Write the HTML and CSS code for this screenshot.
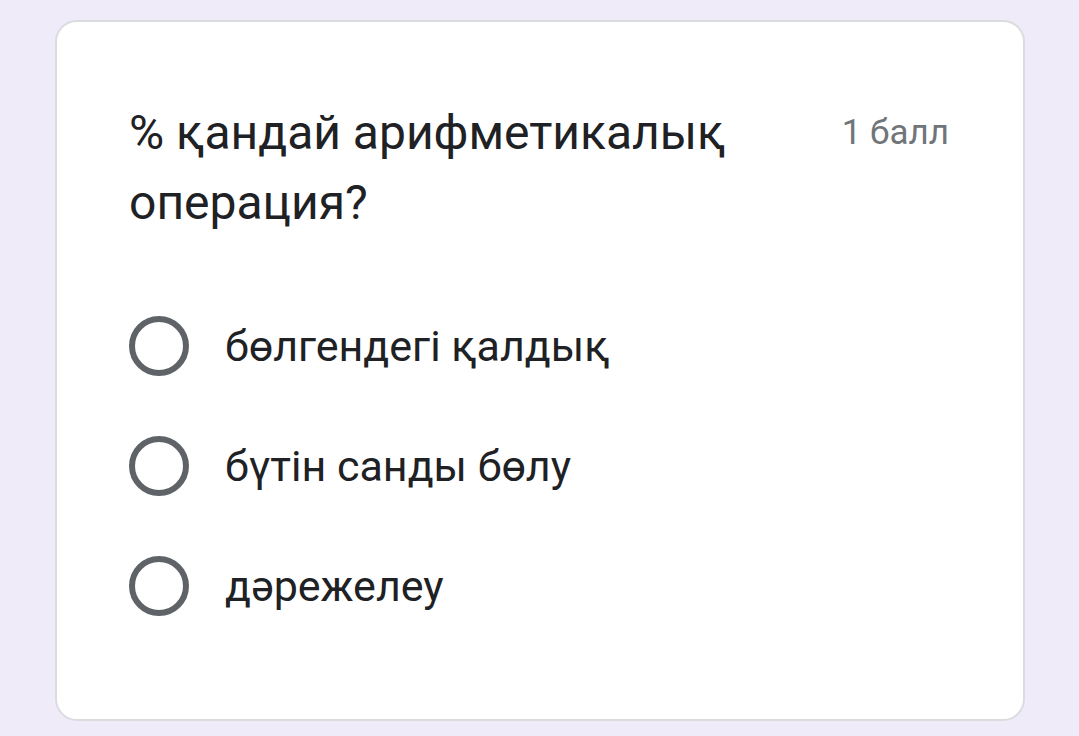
FILE: index.html
```html
<!DOCTYPE html>
<html lang="kk">
<head>
<meta charset="utf-8">
<link rel="stylesheet" href="styles.css">
</head>
<body>
<div class="card">
  <div class="head">
    <div class="title">% қандай арифметикалық операция?</div>
    <div class="points">1 балл</div>
  </div>
  <div class="options">
    <div class="option"><span class="radio"></span><span class="label">бөлгендегі қалдық</span></div>
    <div class="option"><span class="radio"></span><span class="label">бүтін санды бөлу</span></div>
    <div class="option"><span class="radio"></span><span class="label">дәрежелеу</span></div>
  </div>
</div>
</body>
</html>
```
FILE: styles.css
```css
html, body { margin: 0; padding: 0; }
body {
  background: #f0ebf8;
  width: 1079px;
  height: 736px;
  overflow: hidden;
  font-family: Roboto, "Noto Sans", sans-serif;
}
.card {
  margin: 20px 0 0 55px;
  width: 970px;
  height: 701px;
  box-sizing: border-box;
  background: #fff;
  border: 2px solid #dadce0;
  border-radius: 22px;
  padding: 76px 72px 0 72px;
}
.head {
  display: flex;
  justify-content: space-between;
  align-items: flex-start;
}
.title {
  width: 660px;
  font-size: 48px;
  line-height: 70px;
  color: #202124;
}
.points {
  font-size: 35px;
  line-height: 50px;
  color: #70757a;
  margin-top: 10px;
  margin-right: 2px;
}
.options {
  margin-top: 78px;
  display: flex;
  flex-direction: column;
  gap: 60px;
}
.option {
  display: flex;
  align-items: center;
  height: 60px;
}
.radio {
  width: 48px;
  height: 48px;
  border: 6px solid #5f6368;
  border-radius: 50%;
  flex: none;
}
.label {
  margin-left: 36px;
  font-size: 43px;
  color: #202124;
}
```
